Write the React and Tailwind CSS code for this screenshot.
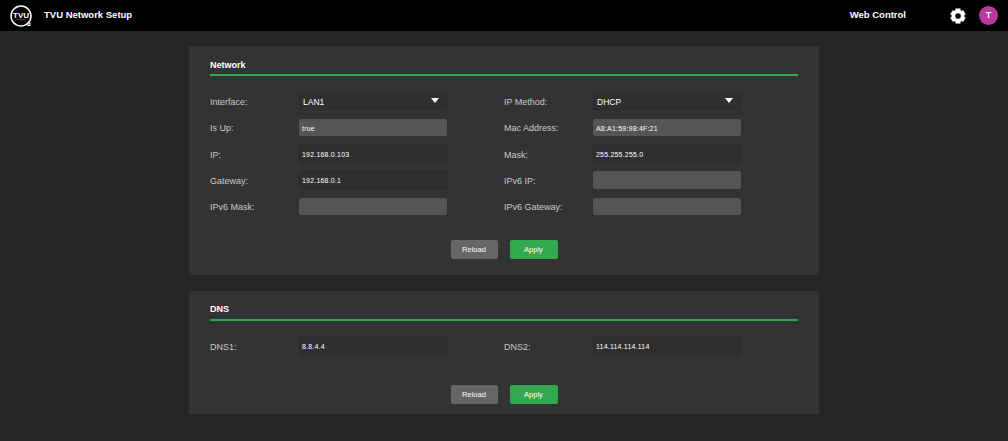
import React from 'react';

// six blunt teeth around a ring, same look as the header gear
const gearPoints = [];
for (let i = 0; i < 6; i++) {
  const a = (i * 60 - 90) * (Math.PI / 180);
  const d = 0.3;
  [[-d - 0.12, 6.1], [-d, 7.6], [d, 7.6], [d + 0.12, 6.1]].forEach(([o, r]) => {
    gearPoints.push(`${(8 + r * Math.cos(a + o)).toFixed(2)} ${(8 + r * Math.sin(a + o)).toFixed(2)}`);
  });
}
const gearPath = `M${gearPoints.join(' L')} Z M8 4.9 A3.1 3.1 0 1 0 8 11.1 A3.1 3.1 0 1 0 8 4.9 Z`;

function Gear() {
  return (
    <svg width="16" height="16" viewBox="0 0 16 16" className="ml-[44px]">
      <path d={gearPath} fill="#fff" fillRule="evenodd" stroke="#fff" strokeWidth="0.5" strokeLinejoin="round" />
    </svg>
  );
}

function Logo() {
  return (
    <svg width="24" height="24" viewBox="0 0 24 24" className="ml-[9px]">
      <circle cx="12" cy="12" r="10" fill="none" stroke="#fff" strokeWidth="1.5" />
      <path d="M18 19 L21.5 18.5 L21.5 22 L18.5 22 Z" fill="#fff" />
      <circle cx="20" cy="20.2" r="0.7" fill="#000" />
      <text x="12" y="13.8" textAnchor="middle" fill="#fff" fontSize="8" fontWeight="700" fontFamily="Liberation Sans, sans-serif">TVU</text>
      <rect x="7.5" y="15.5" width="9" height="0.7" fill="#777" />
    </svg>
  );
}

function Field({ label, value, disabled, select }) {
  return (
    <div className="flex items-center">
      <label className="w-[89px] pt-[3px] text-[9px] text-[#c9c9c9]">{label}</label>
      {select ? (
        <div className="flex h-[17.5px] w-[148px] items-center justify-between rounded-[2px] border border-[#2c2c2c] bg-[#2f2f2f] pl-[3px] pr-[7px] pt-[3px] text-[8.5px] text-white">
          <span>{value}</span>
          <span className="mb-[4px] h-0 w-0 border-x-[4px] border-t-[5px] border-x-transparent border-t-white" />
        </div>
      ) : (
        <input
          readOnly
          value={value || ''}
          className={`h-[17.5px] w-[148px] rounded-[2px] border px-[2px] pt-[1px] text-[7px] tracking-[0.2px] text-white outline-none ${disabled ? 'border-[#555555] bg-[#555555]' : 'border-[#2b2b2b] bg-[#2f2f2f]'}`}
        />
      )}
    </div>
  );
}

function Buttons() {
  return (
    <div className="flex justify-center gap-3">
      <button className="h-[19px] w-[47px] rounded-[2px] bg-[#666666] text-[7.5px] text-white">Reload</button>
      <button className="h-[19px] w-[48px] rounded-[2px] bg-[#32a94f] text-[7.5px] text-white">Apply</button>
    </div>
  );
}

function Card({ title, children }) {
  return (
    <section className="w-[630px] bg-[#333333] px-[21px]">
      <h2 className="flex h-[28px] items-end pb-[2px] text-[9px] font-bold text-white">{title}</h2>
      <div className="h-[2px] bg-[#2fa84c]" />
      {children}
    </section>
  );
}

export default function App() {
  return (
    <div className="min-h-[441px] bg-[#252525] font-['Liberation_Sans',Arial,sans-serif]">
      <header className="flex h-[31px] items-center bg-black text-white">
        <Logo />
        <span className="ml-[11px] text-[9.5px] font-bold">TVU Network Setup</span>
        <span className="ml-auto text-[9.5px] font-bold">Web Control</span>
        <Gear />
        <div className="ml-[13px] mr-[10px] flex h-[19px] w-[19px] items-center justify-center rounded-full bg-[#bb389f] text-[9px] font-bold">T</div>
      </header>

      <main className="flex flex-col items-center gap-4 pt-[15px]">
        <Card title="Network">
          <div className="mt-[16.5px] grid grid-cols-[237px_auto] justify-between gap-y-[8.8px] pr-[57px]">
            <Field label="Interface:" value="LAN1" select />
            <Field label="IP Method:" value="DHCP" select />
            <Field label="Is Up:" value="true" disabled />
            <Field label="Mac Address:" value="A8:A1:59:98:4F:21" disabled />
            <Field label="IP:" value="192.168.0.103" />
            <Field label="Mask:" value="255.255.255.0" />
            <Field label="Gateway:" value="192.168.0.1" />
            <Field label="IPv6 IP:" disabled />
            <Field label="IPv6 Mask:" disabled />
            <Field label="IPv6 Gateway:" disabled />
          </div>
          <div className="pb-4 pt-[24.8px]">
            <Buttons />
          </div>
        </Card>

        <Card title="DNS">
          <div className="mt-[16.5px] grid grid-cols-[237px_auto] justify-between pr-[57px]">
            <Field label="DNS1:" value="8.8.4.4" />
            <Field label="DNS2:" value="114.114.114.114" />
          </div>
          <div className="pb-[10px] pt-[30px]">
            <Buttons />
          </div>
        </Card>
      </main>
    </div>
  );
}
